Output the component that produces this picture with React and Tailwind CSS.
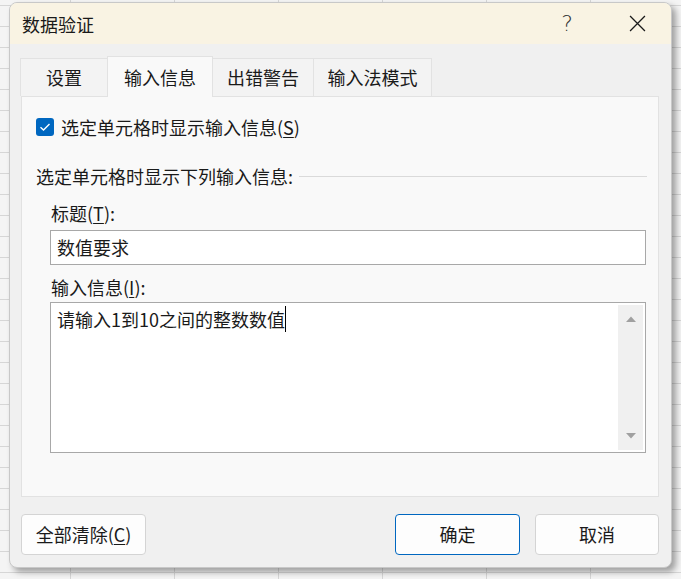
import React from "react";

function Tab({ label, active, w }) {
  if (active) {
    return (
      <div
        className={`${w} h-[41px] -mb-px z-10 flex items-center justify-center bg-[#f9f9f9] border border-b-0 border-[#e2e2e2]`}
      >
        {label}
      </div>
    );
  }
  return (
    <div
      className={`${w} h-[38px] flex items-center justify-center bg-[#f3f3f3] border border-b-0 border-[#e2e2e2] -ml-px`}
    >
      {label}
    </div>
  );
}

export default function App() {
  return (
    <div className="w-[681px] h-[579px] overflow-hidden bg-[#f4f4f4] bg-[linear-gradient(#d6d6d6_1px,transparent_1px),linear-gradient(90deg,#d6d6d6_1px,transparent_1px)] bg-[size:104px_21px] bg-[position:70px_5px] pt-[2px] pl-[9px] font-['Noto_Sans_CJK_SC',sans-serif] text-[18px] text-[#1a1a1a]">
      <div className="w-[663px] h-[566px] rounded-[8px] overflow-hidden bg-[#f0f0f0] border border-[#c8c8c8] shadow-[4px_4px_6px_rgba(0,0,0,0.35)] flex flex-col">
        {/* Title bar */}
        <div className="h-[41px] shrink-0 bg-[#f9f3e3] flex items-center pl-[12px] pr-[24px]">
          <div className="flex-1 text-[18px] leading-none text-[#1a1a1a]">数据验证</div>
          <div className="w-[20px] text-center text-[22px] leading-none mr-[52px] font-['DejaVu_Sans',sans-serif] font-extralight text-[#333]">?</div>
          <svg width="17" height="17" viewBox="0 0 16 16" className="mr-[1px]">
            <path d="M1 1 L15 15 M15 1 L1 15" stroke="#1a1a1a" strokeWidth="1.2" fill="none" />
          </svg>
        </div>

        {/* Tabs */}
        <div className="mt-[12px] ml-[11px] flex items-end h-[40px]">
          <Tab label="设置" w="w-[88px]" />
          <Tab label="输入信息" active w="w-[106px] -ml-px" />
          <Tab label="出错警告" w="w-[102px]" />
          <Tab label="输入法模式" w="w-[119px]" />
        </div>

        {/* Panel */}
        <div className="ml-[11px] w-[638px] h-[401px] shrink-0 bg-[#f9f9f9] border border-[#e2e2e2] pl-[14px] pr-[12px] pt-[19px]">
          <div className="flex items-center h-[22px]">
            <div className="w-[18px] h-[18px] rounded-[3px] bg-[#0067c0] flex items-center justify-center mr-[7px]">
              <svg width="12" height="10" viewBox="0 0 12 10">
                <path d="M1.5 5.2 L4.5 8 L10.5 2" stroke="#ffffff" strokeWidth="1.4" fill="none" />
              </svg>
            </div>
            <span>
              选定单元格时显示输入信息(<span className="underline underline-offset-2">S</span>)
            </span>
          </div>

          <div className="mt-[27px] flex items-center h-[22px]">
            <span className="shrink-0">选定单元格时显示下列输入信息:</span>
            <div className="flex-1 h-px bg-[#dadada] ml-[6px] -mr-px"></div>
          </div>

          <div className="pl-[14px]">
            <div className="mt-[15px] h-[22px] flex items-center pl-px">
              标题(<span className="underline underline-offset-2">T</span>):
            </div>
            <div className="mt-[6px] h-[35px] bg-white border border-[#a8a8a8] flex items-center pl-[6px]">
              数值要求
            </div>
            <div className="mt-[11px] h-[22px] flex items-center pl-px">
              输入信息(<span className="underline underline-offset-2">I</span>):
            </div>
            <div className="mt-[4px] h-[151px] bg-white border border-[#a8a8a8] flex">
              <div className="flex-1 pl-[6px] pt-[3px]">
                <span className="border-r border-black">请输入1到10之间的整数数值</span>
              </div>
              <div className="w-[25px] my-[2px] mr-[2px] bg-[#f0f0f0] flex flex-col items-center justify-between py-[10px]">
                <svg width="12" height="8" viewBox="0 0 12 8">
                  <path d="M1 7 L6 1.5 L11 7 Z" fill="#a0a0a0" />
                </svg>
                <svg width="12" height="8" viewBox="0 0 12 8">
                  <path d="M1 1 L6 6.5 L11 1 Z" fill="#a0a0a0" />
                </svg>
              </div>
            </div>
          </div>
        </div>

        {/* Buttons */}
        <div className="mt-[17px] ml-[11px] mr-[12px] flex items-center">
          <button className="w-[125px] h-[41px] bg-[#fdfdfd] border border-[#d4d4d4] rounded-[4px] text-[18px]">
            全部清除(<span className="underline underline-offset-2">C</span>)
          </button>
          <div className="flex-1"></div>
          <button className="w-[125px] h-[41px] bg-[#fdfdfd] border border-[#0067c0] rounded-[4px] text-[18px] mr-[15px]">
            确定
          </button>
          <button className="w-[124px] h-[41px] bg-[#fdfdfd] border border-[#d4d4d4] rounded-[4px] text-[18px]">
            取消
          </button>
        </div>
      </div>
    </div>
  );
}
